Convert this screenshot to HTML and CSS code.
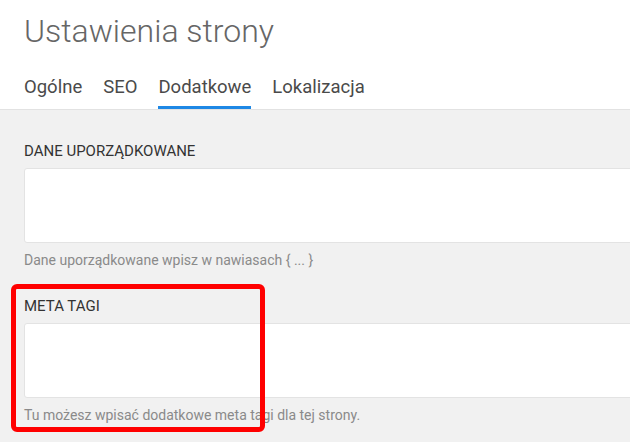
FILE: index.html
```html
<!DOCTYPE html>
<html lang="pl">
<head>
    <meta charset="UTF-8">
    <meta name="viewport" content="width=device-width, initial-scale=1.0">
    <title>Ustawienia strony</title>
    <link rel="stylesheet" href="styles.css">
</head>
<body>
    <header class="page-header">
        <h1 class="page-title">Ustawienia strony</h1>
        <nav class="tabs">
            <a class="tab" href="#">Ogólne</a>
            <a class="tab" href="#">SEO</a>
            <a class="tab active" href="#">Dodatkowe</a>
            <a class="tab" href="#">Lokalizacja</a>
        </nav>
    </header>

    <main class="settings">
        <div class="field">
            <label for="structured_data">DANE UPORZĄDKOWANE</label>
            <textarea id="structured_data" name="structured_data"></textarea>
            <p class="hint">Dane uporządkowane wpisz w nawiasach { ... }</p>
        </div>
        <div class="field highlighted">
            <label for="meta_tags">META TAGI</label>
            <textarea id="meta_tags" name="meta_tags"></textarea>
            <p class="hint">Tu możesz wpisać dodatkowe meta tagi dla tej strony.</p>
            <span class="marker"></span>
        </div>
    </main>
</body>
</html>
```

FILE: styles.css
```css
body {
    font-family: Roboto, "Noto Sans", Arial, sans-serif;
    background-color: #f1f1f1;
    margin: 0;
    padding: 0;
    overflow: hidden;
}

.page-header {
    background-color: #fff;
    padding: 11px 24px 0;
    border-bottom: 1px solid #e2e2e2;
}

.page-title {
    margin: 0;
    font-size: 32px;
    font-weight: 300;
    line-height: 40px;
    color: #666;
}

.tabs {
    display: flex;
    gap: 21px;
    margin-top: 24px;
}

.tab {
    font-size: 18.5px;
    line-height: 24px;
    color: #4a4a4a;
    text-decoration: none;
    padding-bottom: 7px;
    border-bottom: 3px solid transparent;
}

.tab.active {
    border-bottom-color: #1e88e5;
}

.settings {
    padding: 31px 24px 0;
    width: 800px;
}

.field {
    position: relative;
    margin-bottom: 27px;
}

label {
    display: block;
    font-size: 15px;
    line-height: 20px;
    color: #333;
}

textarea {
    display: block;
    box-sizing: border-box;
    width: 100%;
    height: 75px;
    margin-top: 7px;
    background: #fff;
    border: 1px solid #e3e3e3;
    border-radius: 3px;
    resize: none;
}

.hint {
    margin: 8px 0 0;
    font-size: 14px;
    line-height: 18px;
    color: #8a8a8a;
}

/* red frame around the meta tags field */
.marker {
    position: absolute;
    left: -13px;
    top: -12px;
    width: 254px;
    height: 148px;
    box-sizing: border-box;
    border: 5px solid #ff0000;
    border-radius: 6px;
    pointer-events: none;
}
```
